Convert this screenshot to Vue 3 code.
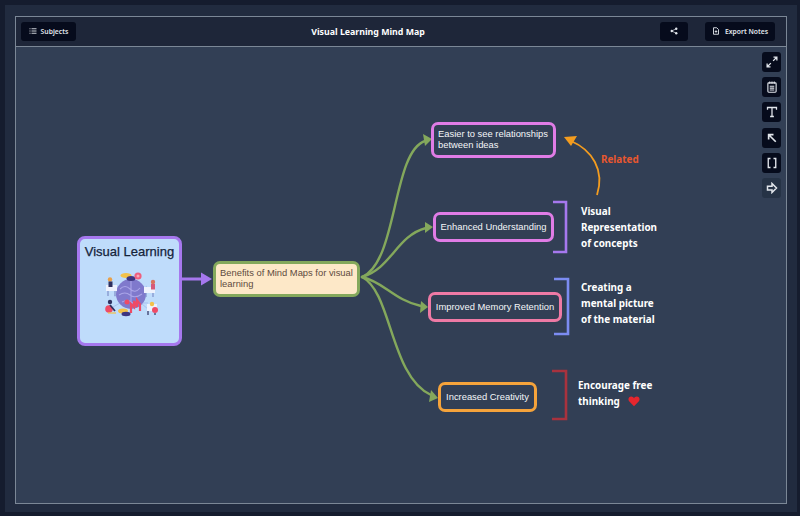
<template>
  <div class="shell">
    <div class="panel">
      <div class="frame">
        <header class="topbar">
          <button class="btn btn-subjects">
            <svg class="ico" viewBox="0 0 16 16" fill="none" stroke="currentColor" stroke-width="1.800">
              <path d="M5 3.500h10M5 8h10M5 12.500h10" />
              <path d="M1 3.500h2M1 8h2M1 12.500h2" />
            </svg>
            <span>Subjects</span>
          </button>
          <h1 class="title">Visual Learning Mind Map</h1>
          <div class="actions">
            <button class="btn btn-share">
              <svg class="ico" viewBox="0 0 16 16" fill="currentColor">
                <circle cx="12.500" cy="3.500" r="2.400" />
                <circle cx="3.500" cy="8" r="2.400" />
                <circle cx="12.500" cy="12.500" r="2.400" />
                <path d="M3.500 8l9-4.500M3.500 8l9 4.500" stroke="currentColor" stroke-width="1.400" />
              </svg>
            </button>
            <button class="btn btn-export">
              <svg class="ico" viewBox="0 0 16 16" fill="none" stroke="currentColor" stroke-width="1.800">
                <path d="M3 1.500h6.500L13 5v9.500H3z" />
                <path d="M8 6.500v5M5.500 9h5" />
              </svg>
              <span>Export Notes</span>
            </button>
          </div>
        </header>

        <main class="canvas">
          <!-- viewBox starts at the canvas corner, so the paths read in page pixels -->
          <svg class="links" viewBox="16 47 770 456" fill="none">
            <g stroke="#84a85c" stroke-width="2.400" stroke-linecap="round">
              <path d="M362 277C398 262 392 152 425 141" />
              <path d="M362 277C392 268 396 236 426 228" />
              <path d="M362 277C384 282 394 300 421 306" />
              <path d="M362 277C392 292 390 376 431 395" />
            </g>
            <g fill="#84a85c">
              <path d="M432 139L423 134L425 146z" />
              <path d="M433 227L425 222L425 233z" />
              <path d="M428 307L421 301L420 313z" />
              <path d="M438 398L431 390L429 402z" />
            </g>
            <path d="M182 279h20" stroke="#a678ee" stroke-width="3" />
            <path d="M212 279l-11-6.500v13z" fill="#a678ee" />

            <path d="M597 195C605 170 592 150 571 141" stroke="#f39c1f" stroke-width="1.800" />
            <path d="M564 137l13-1-6 10z" fill="#f39c1f" />

            <path d="M553 202h13v50h-13" stroke="#a678ee" stroke-width="2.600" />
            <path d="M554 279h14v55h-14" stroke="#7c8cf2" stroke-width="2.600" />
            <path d="M552 371h14v48h-14" stroke="#a8323e" stroke-width="2.600" />
          </svg>

          <div class="node root">
            <div class="root-title">Visual Learning</div>
            <svg class="brain" viewBox="0 0 60 50">
              <g stroke="#9fb0e6" stroke-width="0.600">
                <path d="M14 16l12 8M47 17l-10 8M13 38l14-8M48 40l-12-10M22 27h-8M38 34h10" />
              </g>
              <circle cx="31" cy="25" r="15" fill="#7f79cc" />
              <path d="M20 20q5-5 10 0t10-1M19 26q6-4 11 0t12-1M22 33q6-3 9 0t8-1M31 11v27" stroke="#aaa5e8" stroke-width="1.100" fill="none" />
              <ellipse cx="26" cy="6.500" rx="5.500" ry="2.500" fill="#f2c14a" />
              <ellipse cx="31" cy="9.500" rx="4.500" ry="2.500" fill="#3d3580" />
              <circle cx="38" cy="7" r="3.600" fill="#ef5f7e" />
              <circle cx="38" cy="7" r="1.500" fill="#f7a9b9" />
              <path d="M31 44v-9l3 3v-6l3 6v-7l3 4v7" stroke="#ee4b66" stroke-width="2.200" fill="none" />
              <circle cx="27" cy="33" r="2.500" fill="#ee4b66" />
              <ellipse cx="23" cy="42" rx="5" ry="2.500" fill="#f2c14a" />
              <ellipse cx="26" cy="45" rx="4.500" ry="2.200" fill="#3d3580" />
              <g>
                <rect x="6" y="16" width="11" height="6" fill="#eef2fd" />
                <path d="M8 22v5M15 22v5" stroke="#7f8fc9" stroke-width="1.200" />
                <circle cx="10" cy="10.500" r="2.200" fill="#e8a04a" />
                <rect x="8.500" y="12.500" width="4" height="5.500" fill="#2f3160" />
              </g>
              <g>
                <rect x="44" y="18" width="11" height="6" fill="#eef2fd" />
                <path d="M46 24v4M53 24v4" stroke="#7f8fc9" stroke-width="1.200" />
                <circle cx="53" cy="13" r="2.200" fill="#d9735f" />
                <rect x="51" y="15" width="4" height="5.500" fill="#d65a7a" />
              </g>
              <g>
                <circle cx="10" cy="33" r="2.200" fill="#2f3160" />
                <circle cx="9" cy="40" r="3.800" fill="#ee4b66" />
                <path d="M10 36l5 6" stroke="#2f3160" stroke-width="1.800" />
                <path d="M8 44h8" stroke="#f2c14a" stroke-width="1.200" />
              </g>
              <g>
                <rect x="47" y="35" width="10" height="7" fill="#eef2fd" />
                <circle cx="55" cy="41" r="3" fill="#ee4b66" />
                <circle cx="52" cy="35" r="2.200" fill="#f2c14a" />
                <path d="M48 42v4M55 44v2" stroke="#2f3160" stroke-width="1.200" />
              </g>
            </svg>
          </div>

          <div class="node benefits">Benefits of Mind Maps for visual learning</div>
          <div class="node leaf easier">Easier to see relationships between ideas</div>
          <div class="node leaf single enhanced">Enhanced Understanding</div>
          <div class="node leaf single improved">Improved Memory Retention</div>
          <div class="node leaf single creativity">Increased Creativity</div>

          <div class="note note-related">Related</div>
          <div class="note note-visual">Visual<br />Representation<br />of concepts</div>
          <div class="note note-mental">Creating a<br />mental picture<br />of the material</div>
          <div class="note note-free">
            Encourage free<br />thinking
            <svg class="heart" viewBox="0 0 16 16">
              <path d="M8 15L1.500 8.300C-.5 5.800 1 2 4.300 2 6 2 7.300 3 8 4.300 8.700 3 10 2 11.700 2 15 2 16.500 5.800 14.500 8.300z" fill="#e5262e" />
            </svg>
          </div>

          <div class="tools">
            <button class="tool">
              <svg viewBox="0 0 16 16" fill="none" stroke="currentColor" stroke-width="1.700">
                <path d="M9.500 6.500L14 2M10 1.500h4.500V6M6.500 9.500L2 14M1.500 10v4.500H6" />
              </svg>
            </button>
            <button class="tool">
              <svg viewBox="0 0 16 16" fill="none" stroke="currentColor" stroke-width="1.500">
                <rect x="2.500" y="2.500" width="11" height="12.500" rx="1.200" />
                <path d="M5 .8v3M8 .8v3M11 .8v3M5 7h6M5 9.500h6M5 12h6" />
              </svg>
            </button>
            <button class="tool">
              <svg viewBox="0 0 16 16" fill="none" stroke="currentColor" stroke-width="1.700">
                <path d="M2 5V2h12v3M8 2v12M5.500 14h5" />
              </svg>
            </button>
            <button class="tool">
              <svg viewBox="0 0 16 16" fill="none" stroke="currentColor" stroke-width="2.200">
                <path d="M13 13L4 4M3.500 10V3.500H10" />
              </svg>
            </button>
            <button class="tool">
              <svg viewBox="0 0 16 16" fill="none" stroke="currentColor" stroke-width="1.800">
                <path d="M6 2H3v12h3M10 2h3v12h-3" />
              </svg>
            </button>
            <button class="tool tool-active">
              <svg viewBox="0 0 16 16" fill="none" stroke="currentColor" stroke-width="2">
                <path d="M2 5.500h6V2l6 6-6 6v-3.500H2z" />
              </svg>
            </button>
          </div>
        </main>
      </div>
    </div>
  </div>
</template>

<script setup>
</script>

<style>
html,
body {
  margin: 0;
  overflow: hidden;
}
</style>

<style scoped>
.shell {
  box-sizing: border-box;
  width: 800px;
  height: 516px;
  padding: 5px 3px 4px 5px;
  background: #151c2e;
  font-family: "Noto Sans", "Open Sans", sans-serif;
}

.panel {
  box-sizing: border-box;
  height: 100%;
  padding: 11px 10px 8px;
  background: #212b3f;
}

.frame {
  display: flex;
  flex-direction: column;
  box-sizing: border-box;
  height: 100%;
  border: 1px solid #7b8796;
}

/* Header */
.topbar {
  display: flex;
  align-items: center;
  justify-content: space-between;
  box-sizing: border-box;
  height: 30px;
  padding: 0 11px 1px 5px;
  background: #1e2639;
  border-bottom: 1px solid #7b8796;
}

.title {
  margin: 0;
  padding-top: 2px;
  font-size: 8.800px;
  font-weight: 700;
  color: #fff;
}

.actions {
  display: flex;
  gap: 17px;
}

.btn {
  display: flex;
  align-items: center;
  justify-content: center;
  gap: 4px;
  box-sizing: border-box;
  height: 19px;
  padding: 0;
  border: 0;
  border-radius: 3px;
  background: #060b1c;
  color: #e2e6ec;
  font: 600 6.800px "Noto Sans", sans-serif;
  white-space: nowrap;
}

.ico {
  width: 8px;
  height: 8px;
}

.btn-subjects {
  width: 55px;
}

.btn-share {
  width: 28px;
}

.btn-export {
  width: 70px;
  gap: 5px;
}

/* Canvas */
.canvas {
  position: relative;
  flex: 1;
  background: #323f55;
}

.links {
  position: absolute;
  left: 0;
  top: 0;
  width: 770px;
  height: 456px;
}

.node {
  position: absolute;
  box-sizing: border-box;
  display: flex;
  align-items: center;
  border-style: solid;
  border-width: 3px;
  font-family: "Liberation Sans", Arial, sans-serif;
  font-size: 9.400px;
  line-height: 11px;
}

.root {
  left: 61px;
  top: 189px;
  width: 105px;
  height: 110px;
  flex-direction: column;
  border-color: #a678ee;
  border-radius: 8px;
  background: #bfdcfb;
  color: #14233a;
}

.root-title {
  margin-top: 5px;
  font-size: 13px;
  line-height: 15px;
  white-space: nowrap;
  -webkit-text-stroke: 0.250px #14233a;
}

.brain {
  width: 60px;
  height: 50px;
  margin-top: 10px;
  filter: blur(0.4px);
}

.benefits {
  left: 197px;
  top: 214px;
  width: 147px;
  height: 36px;
  padding: 0 4px 2px;
  border-color: #84a85c;
  border-radius: 7px;
  background: #fde8c8;
  color: #5d4b40;
}

.leaf {
  padding: 0 4px 2px;
  border-radius: 7px;
  background: #323f55;
  color: #f4f6f8;
}

.single {
  justify-content: center;
  white-space: nowrap;
}

.easier {
  left: 415px;
  top: 75px;
  width: 125px;
  height: 36px;
  border-color: #e07ce6;
}

.enhanced {
  left: 417px;
  top: 165px;
  width: 121px;
  height: 30px;
  border-color: #e07ce6;
}

.improved {
  left: 412px;
  top: 245px;
  width: 134px;
  height: 30px;
  border-color: #ee7aa5;
}

.creativity {
  left: 422px;
  top: 335px;
  width: 99px;
  height: 30px;
  border-color: #f5a33b;
}

.note {
  position: absolute;
  font-size: 9.900px;
  font-weight: 700;
  line-height: 16px;
  color: #fff;
  white-space: nowrap;
}

.note-related {
  left: 585px;
  top: 104px;
  color: #e8572f;
}

.note-visual {
  left: 565px;
  top: 156px;
}

.note-mental {
  left: 565px;
  top: 232px;
}

.note-free {
  left: 562px;
  top: 330px;
}

.heart {
  width: 12px;
  height: 12px;
  margin-left: 6px;
  vertical-align: -2px;
}

/* Side tools */
.tools {
  position: absolute;
  top: 5px;
  right: 5px;
  display: flex;
  flex-direction: column;
  gap: 5.200px;
}

.tool {
  display: flex;
  align-items: center;
  justify-content: center;
  width: 19px;
  height: 20px;
  padding: 0;
  border: 0;
  border-radius: 3px;
  background: #060b1c;
  color: #e2e6ec;
}

.tool svg {
  width: 12px;
  height: 12px;
}

.tool-active {
  background: #263346;
}
</style>
